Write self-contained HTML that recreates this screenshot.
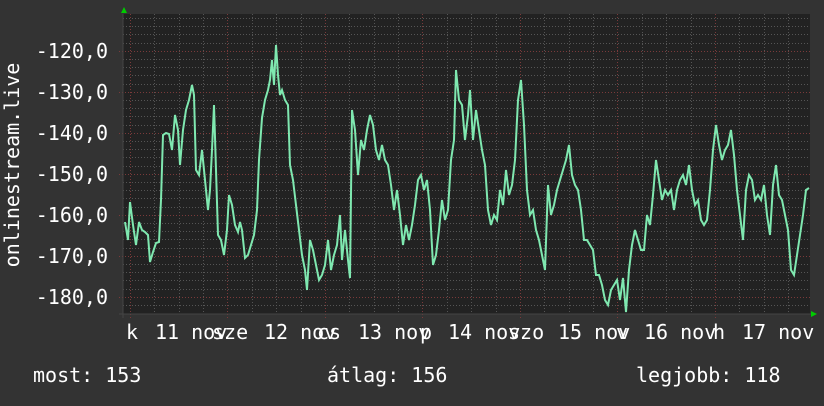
<!DOCTYPE html><html><head><style>
body{margin:0;width:824px;height:402px;background:#333;overflow:hidden;font-family:"DejaVu Sans Mono","Liberation Mono",monospace;color:#fff}
</style></head><body>
<svg width="824" height="402" xmlns="http://www.w3.org/2000/svg" font-family="DejaVu Sans Mono, Liberation Mono, monospace" fill="#fff">
<rect width="824" height="402" fill="#333"/>
<rect x="123" y="14" width="687" height="300" fill="#222"/>
<g stroke="#555" stroke-width="1" stroke-dasharray="1,2">
<path d="M154.5 14V314M179.5 14V314M203.5 14V314M252.5 14V314M276.5 14V314M301.5 14V314M349.5 14V314M374.5 14V314M398.5 14V314M447.5 14V314M471.5 14V314M496.5 14V314M544.5 14V314M569.5 14V314M593.5 14V314M642.5 14V314M666.5 14V314M691.5 14V314M739.5 14V314M764.5 14V314M788.5 14V314"/>
<path d="M123 18.5H810M123 26.5H810M123 34.5H810M123 43.5H810M123 59.5H810M123 67.5H810M123 75.5H810M123 84.5H810M123 100.5H810M123 108.5H810M123 116.5H810M123 125.5H810M123 141.5H810M123 149.5H810M123 157.5H810M123 166.5H810M123 182.5H810M123 190.5H810M123 198.5H810M123 207.5H810M123 223.5H810M123 231.5H810M123 239.5H810M123 248.5H810M123 264.5H810M123 272.5H810M123 280.5H810M123 289.5H810M123 305.5H810"/>
</g>
<g stroke="#7a3a3a" stroke-width="1" stroke-dasharray="1,2">
<path d="M130.5 14V318M227.5 14V318M325.5 14V318M422.5 14V318M520.5 14V318M617.5 14V318M715.5 14V318"/>
<path d="M119 51.5H810M119 92.5H810M119 133.5H810M119 174.5H810M119 215.5H810M119 256.5H810M119 297.5H810"/>
</g>
<path d="M123 14V318M119 314H815" stroke="#444" stroke-width="1"/>
<polygon points="121,13 124,7 127,13" fill="#0c0"/>
<polygon points="811,311 817,314 811,317" fill="#0c0"/>
<polyline fill="none" stroke="#7fe8b0" stroke-width="2" stroke-linejoin="miter" points="125,222 128,240 130,202 133,225 136,245 139,222 142,230 145,232 148,235 150,262 153,252 156,243 159,242 161,200 163,135 166,133 169,134 172,150 175,115 178,130 180,165 183,130 186,110 189,100 192,85 194,95 196,170 199,175 202,150 205,180 208,210 210,190 212,150 214,105 216,170 218,235 221,240 224,255 227,230 229,195 232,205 235,225 238,232 240,222 242,230 245,258 248,255 251,245 254,235 257,210 259,160 262,118 265,100 268,90 270,80 272,60 274,85 276,45 278,75 280,95 282,90 285,100 288,105 290,165 293,180 296,205 299,230 302,255 305,270 307,290 310,240 313,250 316,265 319,280 322,275 325,265 328,240 331,270 334,255 337,245 340,215 342,260 345,230 348,260 350,278 352,110 355,130 358,175 361,140 364,150 367,130 370,115 373,125 376,150 379,160 382,145 385,160 388,165 391,185 394,210 397,190 400,215 403,245 406,225 409,240 412,225 415,205 418,180 421,175 424,190 427,180 430,210 433,265 436,255 439,230 442,200 445,220 448,210 451,160 454,140 456,70 459,100 462,105 465,140 468,115 470,90 473,140 476,110 479,130 482,150 485,165 488,210 491,225 494,215 497,220 500,190 503,205 506,170 509,195 512,185 515,160 518,100 521,80 524,125 527,190 530,215 533,210 536,230 539,240 542,255 545,270 548,185 551,215 554,205 557,190 560,180 563,170 566,160 569,145 572,175 575,185 578,190 581,210 584,240 587,240 590,245 593,250 596,275 599,275 602,285 605,300 608,305 611,290 614,285 617,280 620,300 623,278 626,312 629,270 632,245 635,230 638,240 641,250 644,250 647,215 650,225 653,195 656,160 659,180 662,200 665,190 668,195 671,190 674,210 677,190 680,180 683,175 686,185 689,165 692,190 695,205 698,200 701,220 704,225 707,220 710,190 713,150 716,125 719,145 722,160 725,150 728,145 731,130 734,155 737,190 740,215 743,240 746,190 749,175 752,180 755,200 758,195 761,200 764,185 767,215 770,235 773,185 776,165 779,195 782,200 785,215 788,230 791,270 794,275 797,255 800,235 803,215 806,190 809,188"/>
<g font-size="20" text-anchor="end">
<text x="108" y="58">-120,0</text>
<text x="108" y="99">-130,0</text>
<text x="108" y="140">-140,0</text>
<text x="108" y="181">-150,0</text>
<text x="108" y="222">-160,0</text>
<text x="108" y="263">-170,0</text>
<text x="108" y="304">-180,0</text>
</g>
<text transform="translate(19,165) rotate(-90)" font-size="20" text-anchor="middle">onlinestream.live</text>
<g font-size="20">
<text x="126" y="339">k</text>
<text x="155" y="339">11 nov</text>
<text x="212" y="339">sze</text>
<text x="264" y="339">12 nov</text>
<text x="317" y="339">cs</text>
<text x="358" y="339">13 nov</text>
<text x="420" y="339">p</text>
<text x="448" y="339">14 nov</text>
<text x="508" y="339">szo</text>
<text x="558" y="339">15 nov</text>
<text x="616" y="339">v</text>
<text x="644" y="339">16 nov</text>
<text x="713" y="339">h</text>
<text x="742" y="339">17 nov</text>
</g>
<g font-size="20">
<text x="33" y="382">most: 153</text>
<text x="327" y="382">átlag: 156</text>
<text x="636" y="382">legjobb: 118</text>
</g>
</svg>
</body></html>
